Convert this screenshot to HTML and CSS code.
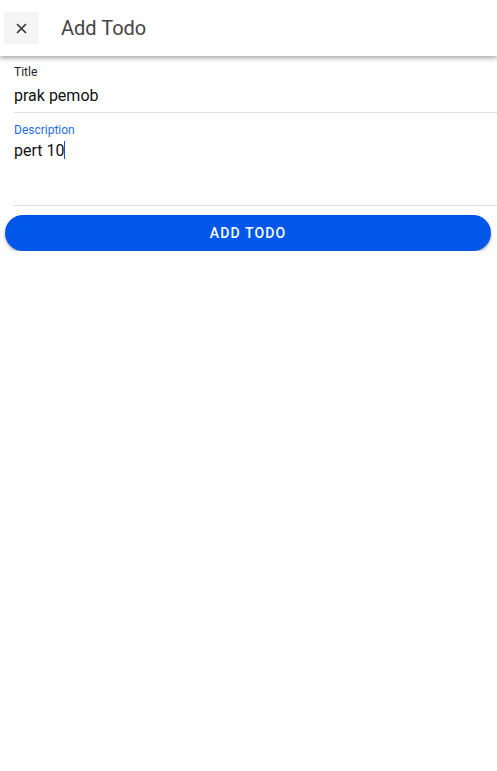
FILE: index.html
```html
<!DOCTYPE html>
<html>
<head>
<meta charset="utf-8">
<link rel="stylesheet" href="styles.css">
</head>
<body>
<header class="appbar">
  <button class="close-btn" aria-label="Close">
    <svg width="11" height="11" viewBox="0 0 11 11"><path d="M1 1L10 10M10 1L1 10" stroke="#333" stroke-width="1.6" fill="none"/></svg>
  </button>
  <h1 class="title">Add Todo</h1>
</header>
<main class="form">
  <div class="field">
    <label class="label">Title</label>
    <div class="value">prak pemob</div>
  </div>
  <div class="field field-multi">
    <label class="label label-active">Description</label>
    <div class="value">pert 10<span class="caret"></span></div>
  </div>
  <button class="add-btn">ADD TODO</button>
</main>
</body>
</html>
```
FILE: styles.css
```css
html, body {
  margin: 0;
  padding: 0;
  background: #fff;
  font-family: Roboto, "Liberation Sans", sans-serif;
}
.appbar {
  height: 56px;
  display: flex;
  align-items: center;
  background: #fff;
  box-shadow: 0 2px 4px rgba(0,0,0,0.25), 0 3px 6px rgba(0,0,0,0.1);
  position: relative;
}
.close-btn {
  margin-left: 4px;
  width: 35px;
  height: 32px;
  border: none;
  border-radius: 2px;
  background: #f5f5f5;
  display: flex;
  align-items: center;
  justify-content: center;
  padding: 0;
}
.title {
  margin: 0 0 0 22px;
  font-size: 20px;
  font-weight: 400;
  color: #444;
}
.form {
  padding: 0 0 0 5px;
}
.field {
  margin-left: 9px;
  border-bottom: 1px solid #ddd;
  padding-top: 10px;
}
.field:first-child {
  padding-top: 9px;
}
.label {
  display: block;
  font-size: 12px;
  line-height: 14px;
  color: #222;
}
.label-active {
  color: #1f6ee8;
}
.value {
  font-size: 16px;
  line-height: 20px;
  color: #111;
  padding: 7px 0 6px;
}
.field-multi {
  height: 93px;
  box-sizing: border-box;
}
.field-multi .value {
  padding-top: 4px;
}
.caret {
  display: inline-block;
  width: 1px;
  height: 18px;
  background: #1f4fd0;
  vertical-align: -3px;
}
.add-btn {
  display: block;
  margin-top: 9px;
  width: 486px;
  height: 36px;
  border: none;
  border-radius: 18px;
  background: #0057e9;
  color: #fff;
  font-family: Roboto, "Liberation Sans", sans-serif;
  font-size: 14px;
  font-weight: 500;
  letter-spacing: 1.1px;
  box-shadow: 0 2px 3px rgba(0,0,0,0.3);
}
```
